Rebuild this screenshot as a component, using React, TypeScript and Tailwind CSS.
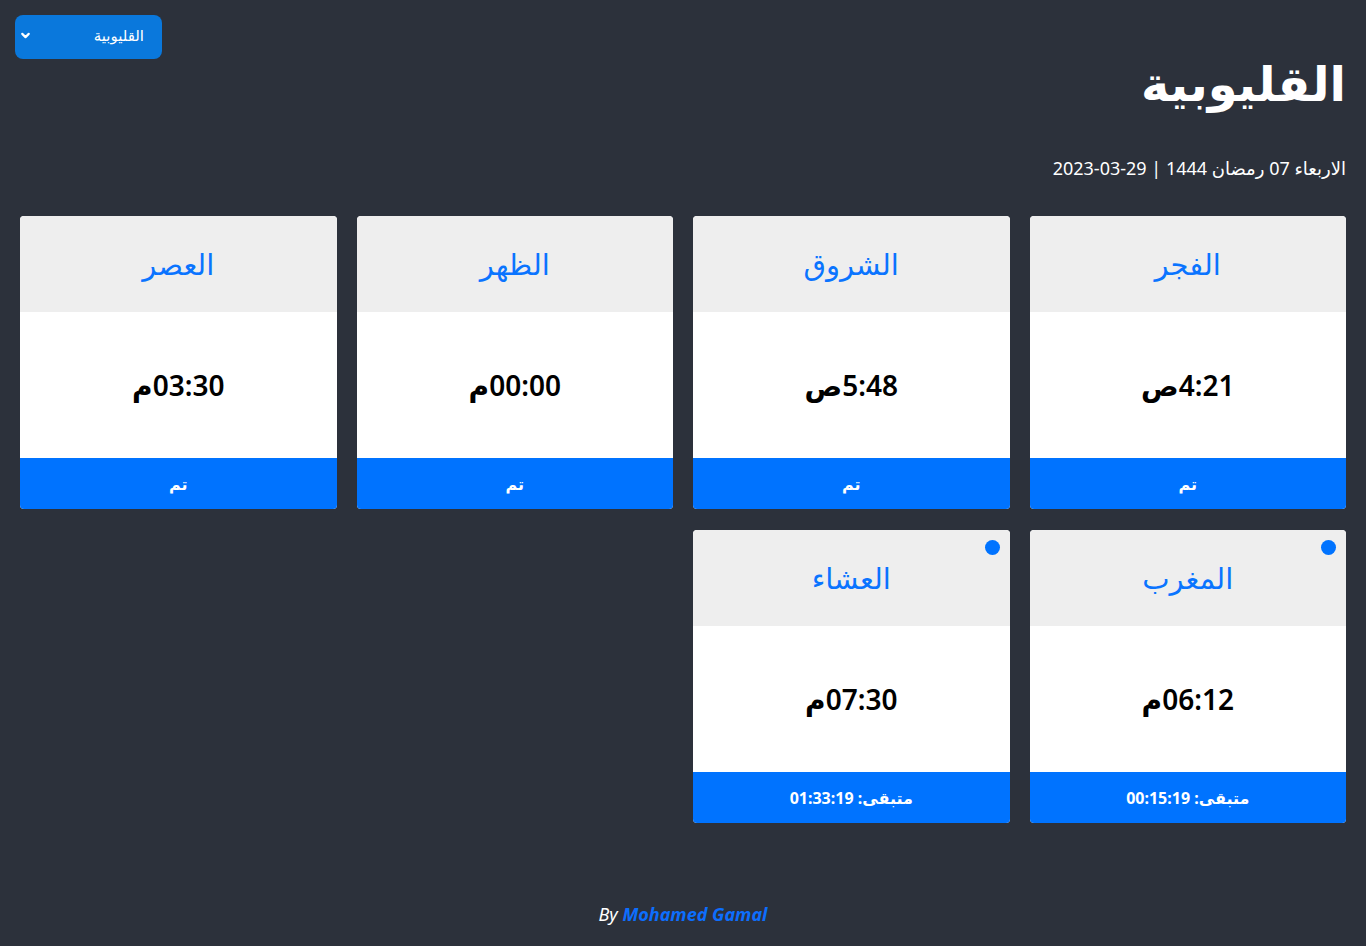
import React from 'react';

const prayers = [
  { name: 'الفجر', time: '4:21ص', status: 'تم', next: false },
  { name: 'الشروق', time: '5:48ص', status: 'تم', next: false },
  { name: 'الظهر', time: '00:00م', status: 'تم', next: false },
  { name: 'العصر', time: '03:30م', status: 'تم', next: false },
  { name: 'المغرب', time: '06:12م', status: 'متبقى: 00:15:19', next: true },
  { name: 'العشاء', time: '07:30م', status: 'متبقى: 01:33:19', next: true },
];

function PrayerCard({ name, time, status, next }: { name: string; time: string; status: string; next: boolean }) {
  return (
    <div className="relative flex flex-col overflow-hidden rounded bg-white">
      {next && <span className="absolute top-[10px] right-[10px] h-[15px] w-[15px] rounded-full bg-[#0073ff]" />}
      <div className="flex h-[96px] items-center justify-center bg-[#eeeeee] text-[29px] font-medium text-[#0a74ff]">{name}</div>
      <div className="flex h-[146px] items-center justify-center text-[28px] font-semibold text-black">
        <span dir="ltr">{time.replace(/[صم]$/, '')}</span>
        <span>{time.slice(-1)}</span>
      </div>
      <div className="flex h-[51px] items-center justify-center bg-[#0073ff] text-[16px] font-bold text-white">{status}</div>
    </div>
  );
}

export default function App() {
  return (
    <div dir="rtl" className="min-h-screen bg-[#2c313b] px-5 pt-[15px] pb-6 text-white" style={{ fontFamily: '"Noto Sans", "DejaVu Sans", sans-serif' }}>
      <div className="flex justify-end">
        <div className="ml-[-5px] flex h-[44px] w-[147px] items-center justify-between rounded-lg bg-[#0a78dc] pr-[18px] pl-[4px] pb-[4px] text-[15px]">
          <span>القليوبية</span>
          <svg width="13" height="13" viewBox="0 0 24 24" fill="none" stroke="white" strokeWidth="4" strokeLinecap="round" strokeLinejoin="round">
            <path d="M6 9l6 6 6-6" />
          </svg>
        </div>
      </div>
      <h1 className="mt-[-6px] text-[48px] leading-[60px] font-bold">القليوبية</h1>
      <p className="mt-[43px] text-[18px] leading-6">الاربعاء 07 رمضان 1444 | 29-03-2023</p>
      <div className="mt-[36px] grid grid-cols-4 gap-x-5 gap-y-[21px]">
        {prayers.map((p) => (
          <PrayerCard key={p.name} {...p} />
        ))}
      </div>
      <p dir="ltr" className="mt-[78px] text-center text-[18px] italic">
        By <span className="font-bold text-[#0d6efd]">Mohamed Gamal</span>
      </p>
    </div>
  );
}
